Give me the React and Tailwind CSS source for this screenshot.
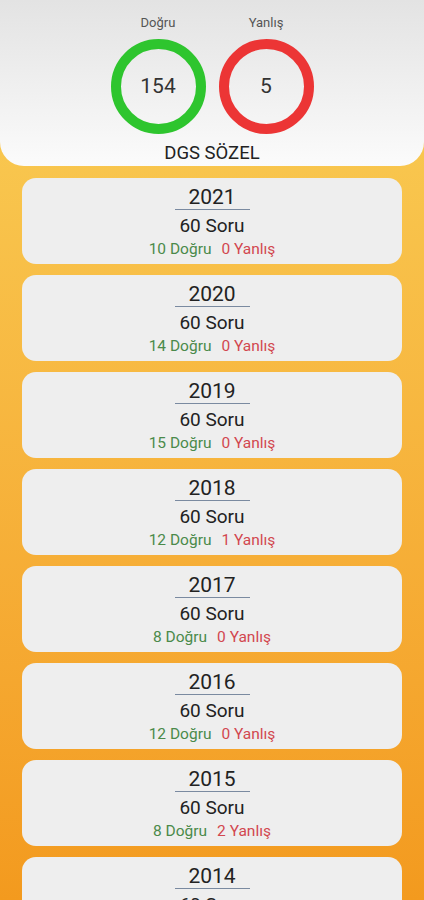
import React from "react";

const items = [
  { y: "2021", d: 10, w: 0 },
  { y: "2020", d: 14, w: 0 },
  { y: "2019", d: 15, w: 0 },
  { y: "2018", d: 12, w: 1 },
  { y: "2017", d: 8, w: 0 },
  { y: "2016", d: 12, w: 0 },
  { y: "2015", d: 8, w: 2 },
  { y: "2014", d: 9, w: 1 },
];

export default function App() {
  return (
    <div
      className="h-screen overflow-hidden bg-gradient-to-b from-[#f9cf56] to-[#f39a1e]"
      style={{ fontFamily: "Roboto, 'Liberation Sans', sans-serif" }}
    >
      <div className="h-[166px] rounded-b-[24px] bg-gradient-to-b from-[#e3e3e3] to-[#fbfbfb] flex flex-col items-center">
        <div className="flex gap-[13px] mt-[14px]">
          <div className="flex flex-col items-center w-[95px]">
            <span className="text-[13px] leading-[17px] text-[#555]">Doğru</span>
            <div className="mt-[8px] w-[95px] h-[95px] rounded-full border-[10px] border-[#2ec52e] flex items-center justify-center text-[21px] text-[#333]">
              154
            </div>
          </div>
          <div className="flex flex-col items-center w-[95px]">
            <span className="text-[13px] leading-[17px] text-[#555]">Yanlış</span>
            <div className="mt-[8px] w-[95px] h-[95px] rounded-full border-[10px] border-[#ec3535] flex items-center justify-center text-[21px] text-[#333]">
              5
            </div>
          </div>
        </div>
        <div className="mt-[8px] text-[18.5px] leading-[22px] text-[#222]">DGS SÖZEL</div>
      </div>
      <div className="flex flex-col gap-[11px] px-[22px] pt-[12px]">
        {items.map((it) => (
          <div
            key={it.y}
            className="h-[86px] shrink-0 rounded-[14px] bg-[#eeeeee] flex flex-col items-center pt-[7px]"
          >
            <div className="w-[75px] text-center text-[21px] leading-[24px] text-[#222] border-b border-[#7a8aa0]">
              {it.y}
            </div>
            <div className="mt-[5px] text-[19px] leading-[22px] text-[#222]">60 Soru</div>
            <div className="mt-[3px] text-[15.5px] leading-[18px] flex gap-[10px]">
              <span className="text-[#4a8a4a]">{it.d} Doğru</span>
              <span className="text-[#d2474f]">{it.w} Yanlış</span>
            </div>
          </div>
        ))}
      </div>
    </div>
  );
}
